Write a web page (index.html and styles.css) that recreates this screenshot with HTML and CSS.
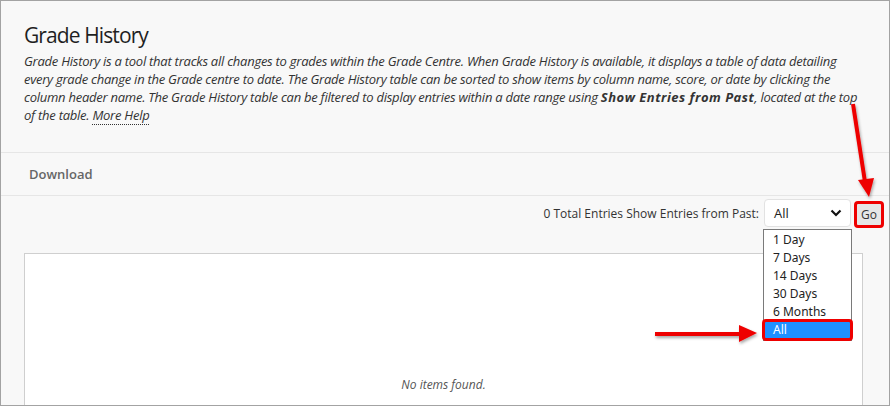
FILE: index.html
```html
<!DOCTYPE html>
<html>
<head>
<meta charset="utf-8">
<link rel="stylesheet" href="styles.css">
</head>
<body>
<div class="page">
  <div class="header">
    <h1 class="title">Grade History</h1>
    <p class="intro">Grade History is a tool that tracks all changes to grades within the Grade Centre. When Grade History is available, it displays a table of data detailing every grade change in the Grade centre to date. The Grade History table can be sorted to show items by column name, score, or date by clicking the column header name. The Grade History table can be filtered to display entries within a date range using <b>Show Entries from Past</b>, located at the top of the table. <span class="help">More Help</span></p>
  </div>
  <div class="actionbar"><span class="action">Download</span></div>
  <div class="toolbar">
    <span class="label">0 Total Entries Show Entries from Past:</span>
    <div class="select-wrap">
      <div class="select"><span>All</span>
        <svg class="chev" width="12" height="8" viewBox="0 0 12 8"><path d="M1.5 1.5 L6 6 L10.5 1.5" fill="none" stroke="#111" stroke-width="2.2"/></svg>
      </div>
      <ul class="options">
        <li>1 Day</li>
        <li>7 Days</li>
        <li>14 Days</li>
        <li>30 Days</li>
        <li>6 Months</li>
        <li class="selected">All</li>
      </ul>
    </div>
    <span class="go">Go</span>
  </div>
  <div class="table-box">
    <p class="empty">No items found.</p>
  </div>
  <svg class="arrows" width="890" height="406" viewBox="0 0 890 406">
    <defs>
      <filter id="sh" x="-20%" y="-20%" width="140%" height="140%">
        <feDropShadow dx="1" dy="2" stdDeviation="1.5" flood-color="#000" flood-opacity="0.35"/>
      </filter>
    </defs>
    <g filter="url(#sh)" fill="#ee0000" stroke="#ee0000">
      <line x1="853" y1="104" x2="865" y2="182" stroke-width="4"/>
      <polygon points="858,180 874,178 869,197" stroke="none"/>
      <line x1="655" y1="334" x2="742" y2="334" stroke-width="4"/>
      <polygon points="739,325 757,333 739,342" stroke="none"/>
    </g>
  </svg>
</div>
</body>
</html>
```
FILE: styles.css
```css
* { box-sizing: border-box; }
html, body { margin: 0; padding: 0; }
body { font-family: "Open Sans", "Noto Sans", sans-serif; color: #262626; }
.page {
  position: relative;
  width: 890px;
  height: 406px;
  overflow: hidden;
  background: #f8f8f8;
  border: 1px solid #a3a3a3;
  display: flex;
  flex-direction: column;
}
.header { padding: 19px 27px 0 23px; height: 151px; }
.title { margin: 0; font-size: 21px; letter-spacing: -0.9px; font-weight: 400; line-height: 30px; color: #1f1f1f; }
.intro { margin: 2px 0 0; font-size: 13px; letter-spacing: -0.25px; font-style: italic; line-height: 18px; color: #333; }
.intro b { font-weight: 700; letter-spacing: 0.5px; }
.help { border-bottom: 1px dotted #333; }
.actionbar {
  height: 44px;
  border-top: 1px solid #e6e6e6;
  border-bottom: 1px solid #e6e6e6;
  display: flex;
  align-items: center;
  padding-left: 28px;
}
.action { font-size: 13px; font-weight: 600; color: #666; }
.toolbar {
  height: 57px;
  display: flex;
  align-items: flex-start;
  justify-content: flex-end;
  padding: 3px 7px 0 0;
}
.label { font-size: 12px; color: #333; margin-top: 6px; margin-right: 5px; }
.select-wrap { position: relative; }
.select {
  width: 87px;
  height: 28px;
  background: #fff;
  border: 1px solid #e2e2e2;
  border-radius: 4px;
  display: flex;
  align-items: center;
  justify-content: space-between;
  padding: 0 8px 0 9px;
  font-size: 13px;
  color: #222;
}
.chev { display: block; }
.options {
  position: absolute;
  left: -1px;
  top: 30px;
  width: 89px;
  margin: 0;
  padding: 1px 0 1px;
  list-style: none;
  background: #fff;
  border: 1px solid #7a7a7a;
  z-index: 2;
}
.options li {
  font-family: "Noto Sans", "Open Sans", sans-serif;
  font-size: 12px;
  line-height: 18px;
  height: 18px;
  padding-left: 9px;
  color: #222;
}
.options li.selected {
  background: #1e90ff;
  color: #fff;
  outline: 3px solid #ee0000;
  outline-offset: -1px;
  border-radius: 2px;
}
.go {
  margin-left: 5px;
  margin-top: 4px;
  width: 26px;
  height: 23px;
  background: #e6e6e6;
  font-size: 12px;
  color: #333;
  display: flex;
  align-items: center;
  justify-content: center;
  outline: 3px solid #ee0000;
  outline-offset: -1px;
  border-radius: 2px;
}
.table-box {
  flex: 1;
  margin: 0 26px 0 23px;
  background: #fff;
  border: 1px solid #cfcfcf;
  border-bottom: none;
  display: flex;
  align-items: flex-end;
  justify-content: center;
}
.empty { margin: 0 0 12px; font-size: 12px; font-style: italic; color: #555; }
.arrows { position: absolute; left: -1px; top: -1px; pointer-events: none; }
```
